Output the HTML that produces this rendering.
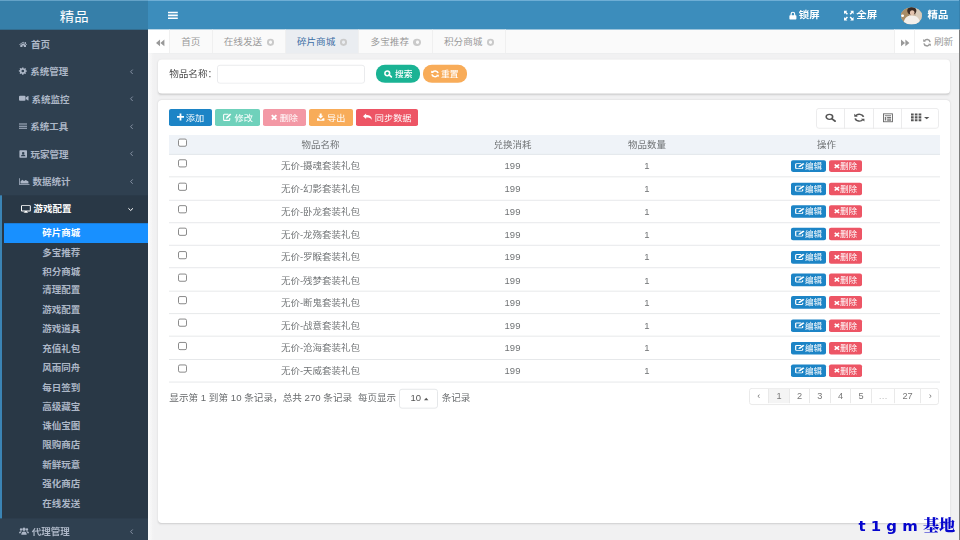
<!DOCTYPE html>
<html lang="zh-CN">
<head>
<meta charset="utf-8">
<title>精品</title>
<style>
*{box-sizing:border-box;margin:0;padding:0}
html,body{width:960px;height:540px;overflow:hidden}
body{font-family:"Liberation Sans","Noto Sans CJK SC",sans-serif;font-size:9.5px;color:#676a6c;background:#f1f1f2;position:relative}
svg{display:block;position:absolute;overflow:visible}
div,span{white-space:nowrap}
/* sidebar */
#side{position:absolute;left:0;top:0;width:147.5px;height:600px;background:#2f4050}
#logo{position:absolute;left:0;top:0;width:147.5px;height:33.333px;background:#367fa9;color:#fff;font-size:14.4px;line-height:34.667px;text-align:center;padding-left:1px;border-top:1.4px solid #6aa6cb}
.mi{position:absolute;left:0;width:147.5px;height:30.556px;color:#adb7c7;font-weight:700;font-size:9.5px;line-height:31.444px;padding-left:30.5px}
.mi.on{color:#fff}
#open{position:absolute;left:0;top:217px;width:147.5px;height:359.333px;background:#293846;border-left:2.2px solid #3b84b4}
.si{position:absolute;left:4px;width:143.5px;height:22.222px;line-height:23.333px;color:#adb7c7;font-weight:700;font-size:9.5px;padding-left:38.3px}
.si.on{color:#fff}
/* navbar */
#nav{position:absolute;left:147.5px;top:0;width:812.5px;height:33.333px;background:#3c8dbc;border-top:1.4px solid #74b3d8}
.nt{position:absolute;top:0;line-height:32.222px;font-weight:700;font-size:10.4px;color:#fff}
/* tabs */
#tabs{position:absolute;left:147.5px;top:33.333px;width:812.5px;height:26.667px;background:#fafafa;border-bottom:1px solid #ebecee}
.tab{position:absolute;top:0;height:25.556px;line-height:28.889px;font-size:9.65px;color:#999;border-right:1px solid #f0f0f0;background:#fafafa}
.tab.w{background:#fff}
.tab.on{background:#eaedf1;color:#3b6ea5}
.tab i{position:absolute;top:9.667px;width:7.6px;height:8px;border-radius:50%;background:#cacaca}
.tab i:after{content:"";position:absolute;left:2.2px;top:2.444px;width:3px;height:3.333px;border-radius:50%;background:#fff}
.tab i:after{background:#fafafa}.tab.on i:after{background:#eaedf1}
/* panels */
.panel{position:absolute;left:157.7px;width:792.3px;background:#fff;border-radius:4px;box-shadow:0 1px 2px rgba(120,120,120,.30)}
.btn{position:absolute;top:120.556px;height:19.222px;line-height:20.444px;border-radius:2px;color:#fff;font-size:9.2px;padding-left:0}
.btn span{position:absolute;top:0}
.hr{position:absolute;left:169px;width:770.5px;height:22.222px;top:150px;background:#eff3f8;border-bottom:1px solid #e2e6ea}
.row{position:absolute;left:169px;width:770.5px;height:25.3px;border-bottom:1px solid #e4e6e8}
.c{position:absolute;top:0;height:100%;text-align:center;color:#707375;font-size:9.5px;transform:translateX(-50%)}
.hr .c{line-height:21.778px}
.row .c{line-height:25.889px}
.cb{position:absolute;left:8.7px;width:8.9px;height:9px;border:1px solid #858585;border-radius:2px;background:#fff}
.ab{position:absolute;top:5.556px;height:13.889px;line-height:14.778px;border-radius:2px;color:#fff;font-size:8.6px}
.ab span{position:absolute;top:0}
.pg{position:absolute;top:0;height:16px;line-height:16.667px;border-right:1px solid #e9e9e9;text-align:center;font-size:9.2px;color:#777}
#wm{position:absolute;left:858.5px;top:514.2px;font-family:"DejaVu Sans","Noto Serif CJK SC",serif;font-weight:700;font-size:14.9px;color:#0505cd;line-height:24px}
#wm b{font-size:16.2px;font-weight:900}
#root{position:absolute;left:0;top:0;width:960px;height:600px;transform:scaleY(0.9);transform-origin:0 0}
</style>
</head>
<body>
<div id="root">

<div id="side">
<div id="logo">精品</div>
<div class="mi" style="top:33.5px"><svg style="left:19.2px;top:12.111px" width="8.3" height="6.556" viewBox="0 0 14 12" preserveAspectRatio="none"><path d="M7 0.6 L0.3 6.2 L1.2 7.2 L7 2.4 L12.8 7.2 L13.7 6.2 L11.6 4.4 V1.2 H10 V3.1 Z M7 3.6 L2.2 7.6 V11.6 H5.8 V8.6 H8.2 V11.6 H11.8 V7.6 Z" fill="#adb7c7"/></svg><span style="position:absolute;left:31.1px">首页</span></div>
<div class="mi" style="top:64.056px"><svg style="left:19.2px;top:11.444px" width="7.6" height="7.667" viewBox="0 0 16 16" preserveAspectRatio="none"><path fill="#adb7c7" fill-rule="evenodd" d="M6.6 0h2.8l.4 2.1 1.3.55 1.8-1.2 2 2-1.2 1.8.55 1.3 2.1.4v2.8l-2.1.4-.55 1.3 1.2 1.8-2 2-1.8-1.2-1.3.55-.4 2.1H6.6l-.4-2.1-1.3-.55-1.8 1.2-2-2 1.2-1.8-.55-1.3L-.3 9.4V6.6l2.1-.4.55-1.3-1.2-1.8 2-2 1.8 1.2 1.3-.55zM8 5.2a2.8 2.8 0 100 5.6 2.8 2.8 0 000-5.6z"/></svg><span style="position:absolute;left:30.2px">系统管理</span></div>
<svg style="left:130.4px;top:76.556px" width="3" height="5.556" viewBox="0 0 3 5" preserveAspectRatio="none"><path d="M2.700 0.300L0.600 2.500 2.700 4.700" fill="none" stroke="#8e9aab" stroke-width="0.9"/></svg>
<div class="mi" style="top:94.611px"><svg style="left:19.2px;top:11.778px" width="9.5" height="6.333" viewBox="0 0 14 10" preserveAspectRatio="none"><path fill="#adb7c7" d="M1.5 0.8h6.6a1.5 1.5 0 011.5 1.5v5.4a1.5 1.5 0 01-1.5 1.5H1.5A1.5 1.5 0 010 7.7V2.3A1.5 1.5 0 011.5.8zM10.2 3.8L13.2 1c.4-.3.8-.1.8.3v7.4c0 .4-.4.6-.8.3l-3-2.800z"/></svg><span style="position:absolute;left:31.6px">系统监控</span></div>
<svg style="left:130.4px;top:107.111px" width="3" height="5.556" viewBox="0 0 3 5" preserveAspectRatio="none"><path d="M2.700 0.300L0.600 2.500 2.700 4.700" fill="none" stroke="#8e9aab" stroke-width="0.9"/></svg>
<div class="mi" style="top:125.278px"><svg style="left:19.2px;top:12.111px" width="8.0" height="6.333" viewBox="0 0 12 10" preserveAspectRatio="none"><path fill="#adb7c7" d="M0 0.3h12v1.7H0zM0 4.15h12v1.7H0zM0 8h12v1.7H0z"/></svg><span style="position:absolute;left:30.2px">系统工具</span></div>
<svg style="left:130.4px;top:137.778px" width="3" height="5.556" viewBox="0 0 3 5" preserveAspectRatio="none"><path d="M2.700 0.300L0.600 2.500 2.700 4.700" fill="none" stroke="#8e9aab" stroke-width="0.9"/></svg>
<div class="mi" style="top:155.722px"><svg style="left:19.2px;top:11.167px" width="8.0" height="8.222" viewBox="0 0 12 12" preserveAspectRatio="none"><path fill="#adb7c7" fill-rule="evenodd" d="M1.6 0h9.4a1 1 0 011 1v10a1 1 0 01-1 1H1.600a1 1 0 01-1-1V1a1 1 0 011-1zM6.300 2.600a1.900 1.900 0 100 3.800 1.900 1.900 0 000-3.800zM3 9.600h6.600c0-2-1.200-2.900-3.300-2.900S3 7.600 3 9.600z"/></svg><span style="position:absolute;left:30.5px">玩家管理</span></div>
<svg style="left:130.4px;top:168.222px" width="3" height="5.556" viewBox="0 0 3 5" preserveAspectRatio="none"><path d="M2.700 0.300L0.600 2.500 2.700 4.700" fill="none" stroke="#8e9aab" stroke-width="0.9"/></svg>
<div class="mi" style="top:186.278px"><svg style="left:19.2px;top:11.667px" width="10.5" height="7.222" viewBox="0 0 14 10" preserveAspectRatio="none"><path fill="#adb7c7" d="M0 0h1v9h13v1H0zM2 8.200V5l2.300-2.800 2.400 2.200 2.300-1.800 3.600 2.400v3.200z"/></svg><span style="position:absolute;left:32.6px">数据统计</span></div>
<svg style="left:130.4px;top:198.778px" width="3" height="5.556" viewBox="0 0 3 5" preserveAspectRatio="none"><path d="M2.700 0.300L0.600 2.500 2.700 4.700" fill="none" stroke="#8e9aab" stroke-width="0.9"/></svg>
<div id="open"></div>
<div class="mi on" style="top:216.833px"><svg style="left:20.8px;top:10.889px" width="9.800" height="8.444" viewBox="0 0 14 12" preserveAspectRatio="none"><path fill="#fff" fill-rule="evenodd" d="M1.200 0h11.600a1.200 1.200 0 011.200 1.200v7.400a1.200 1.200 0 01-1.200 1.200H8.600l.5 1.200h1v1H3.900v-1h1l.5-1.200H1.200A1.200 1.200 0 010 8.600V1.200A1.200 1.200 0 011.200 0zM1.400 1.400v6.800h11.200V1.400z"/></svg><span style="position:absolute;left:33.5px">游戏配置</span></div>
<svg style="left:127.5px;top:230.667px" width="5.4" height="3.556" viewBox="0 0 5.400 3.200" preserveAspectRatio="none"><path d="M0.400 0.400L2.700 2.600 5 0.400" fill="none" stroke="#fff" stroke-width="1"/></svg>
<div style="position:absolute;left:4px;top:247.556px;width:143.500px;height:22.222px;background:#1890ff"></div>
<div class="si on" style="top:247.056px">碎片商城</div>
<div class="si" style="top:268.522px">多宝推荐</div>
<div class="si" style="top:289.989px">积分商城</div>
<div class="si" style="top:311.456px">清理配置</div>
<div class="si" style="top:332.922px">游戏配置</div>
<div class="si" style="top:354.389px">游戏道具</div>
<div class="si" style="top:375.856px">充值礼包</div>
<div class="si" style="top:397.322px">风雨同舟</div>
<div class="si" style="top:418.789px">每日签到</div>
<div class="si" style="top:440.256px">高级藏宝</div>
<div class="si" style="top:461.722px">诛仙宝图</div>
<div class="si" style="top:483.189px">限购商店</div>
<div class="si" style="top:504.656px">新鲜玩意</div>
<div class="si" style="top:526.122px">强化商店</div>
<div class="si" style="top:547.589px">在线发送</div>
<div class="mi" style="top:574.722px"><svg style="left:19px;top:10.889px" width="10" height="8.444" viewBox="0 0 15 11" preserveAspectRatio="none"><path fill="#adb7c7" d="M7.500 0.200a2.500 2.500 0 110 5 2.500 2.500 0 010-5zM3 1.400a1.800 1.800 0 110 3.600 1.800 1.800 0 010-3.600zM12 1.400a1.800 1.800 0 110 3.600 1.800 1.800 0 010-3.600zM3.400 10.800c0-3.400 1.600-5 4.100-5s4.100 1.600 4.100 5zM0 8.400c0-2 1-3 3-3 .5 0 .9.100 1.200.300C3 6.500 2.500 7.500 2.400 8.400zM15 8.400c0-2-1-3-3-3-.5 0-.9.100-1.200.300 1.200.8 1.700 1.800 1.800 2.700z"/></svg><span style="position:absolute;left:31.7px">代理管理</span></div>
<svg style="left:130.4px;top:587.778px" width="3" height="5.556" viewBox="0 0 3 5" preserveAspectRatio="none"><path d="M2.700 0.300L0.600 2.500 2.700 4.700" fill="none" stroke="#8e9aab" stroke-width="0.9"/></svg>
</div>
<div id="nav">
<svg style="left:20.700px;top:12px" width="9.800" height="8.222" viewBox="0 0 12 9.500" preserveAspectRatio="none"><path fill="#fff" d="M0 0h12v2H0zM0 3.750h12v2H0zM0 7.500h12v2H0z"/></svg>
<svg style="left:641.200px;top:11.556px" width="7.800" height="8.667" viewBox="0 0 10 10" preserveAspectRatio="none"><path fill="#fff" fill-rule="evenodd" d="M5 0a3 3 0 013 3v1.600h.6a.9.900 0 01.9.900v3.600a.9.900 0 01-.9.900H1.400a.9.900 0 01-.9-.9V5.500a.9.900 0 01.9-.9H2V3a3 3 0 013-3zm0 1.500A1.500 1.500 0 003.500 3v1.600h3V3A1.500 1.500 0 005 1.500z"/></svg>
<div class="nt" style="left:651.300px">锁屏</div>
<svg style="left:696.500px;top:11.333px" width="9.600" height="10.667" viewBox="0 0 12 12" preserveAspectRatio="none"><path fill="#fff" d="M0 0h4.200L2.800 1.400 5 3.600 3.600 5 1.400 2.800 0 4.200zM12 0v4.200L10.600 2.800 8.400 5 7 3.600 9.200 1.400 7.800 0zM0 12V7.800l1.400 1.400L3.600 7 5 8.400 2.800 10.600 4.200 12zM12 12H7.800l1.400-1.400L7 8.400 8.400 7l2.200 2.200L12 7.800z"/></svg>
<div class="nt" style="left:708.800px">全屏</div>
<svg style="left:753.400px;top:7.333px" width="21" height="19.111" viewBox="0 0 21 17.200" preserveAspectRatio="none"><defs><clipPath id="av"><ellipse cx="10.500" cy="8.600" rx="10.500" ry="8.600"/></clipPath></defs><g clip-path="url(#av)"><rect width="21" height="17.200" fill="#cdbba4"/><rect x="0" y="0" width="8" height="17.200" fill="#a88c66"/><rect x="15" y="0" width="6" height="17.200" fill="#d9ccbb"/><ellipse cx="10.800" cy="3.600" rx="4.600" ry="4" fill="#3b2a22"/><ellipse cx="11.200" cy="5.600" rx="2.300" ry="2.600" fill="#e3c3ad"/><path d="M2.500 17.200c.3-6 3-8.800 8.300-8.800s8 2.800 8.300 8.800z" fill="#f3efea"/><ellipse cx="1.500" cy="8.500" rx="1.500" ry="1.200" fill="#fff"/></g></svg>
<div class="nt" style="left:780px">精品</div>
</div>
<div style="position:absolute;left:958.700px;top:0;width:1.300px;height:33px;background:#3681ad"></div>
<div id="tabs">
<div class="tab w" style="left:0;width:22.500px"><svg style="left:8px;top:11.111px" width="8.400" height="7.333" viewBox="0 0 10 8" preserveAspectRatio="none"><path fill="#999" d="M4.800 0v8L0 4zM10 0v8L5.200 4z"/></svg></div>
<div class="tab" style="left:22.5px;width:42.5px;padding-left:11.2px">首页</div>
<div class="tab" style="left:65.0px;width:73.2px;padding-left:11.2px">在线发送<i style="left:54.1px"></i></div>
<div class="tab on" style="left:138.2px;width:73.7px;padding-left:11.2px">碎片商城<i style="left:54.1px"></i></div>
<div class="tab" style="left:211.9px;width:73.4px;padding-left:11.2px">多宝推荐<i style="left:54.1px"></i></div>
<div class="tab" style="left:285.3px;width:73.4px;padding-left:11.2px">积分商城<i style="left:54.1px"></i></div>
<div class="tab w" style="left:746.500px;width:21px;border-left:1px solid #f0f0f0"><svg style="left:6px;top:10.667px" width="8.400" height="7.333" viewBox="0 0 10 8" preserveAspectRatio="none"><path fill="#999" d="M0 0v8l4.800-4zM5.200 0v8L10 4z"/></svg></div>
<div class="tab w" style="left:767.500px;width:45px;border-right:none;padding-left:19px"><svg style="left:8.200px;top:9.556px" width="8" height="8.889" viewBox="0 0 12 12" preserveAspectRatio="none"><path fill="none" stroke="#999" stroke-width="2.200" d="M10.600 5A4.700 4.700 0 002 3.400M1.400 7A4.700 4.700 0 0010 8.600"/><path fill="#999" d="M0.300 0.600v4h4zM11.700 11.400v-4h-4z"/></svg>刷新</div>
</div>
<div style="position:absolute;left:147.500px;top:59.222px;width:6px;height:540.778px;background:linear-gradient(90deg,#fbfbfb,rgba(251,251,251,0))"></div>
<div class="panel" style="top:66.444px;height:37.778px"></div>
<div style="position:absolute;left:169.200px;top:71.111px;line-height:21.667px;font-size:9.600px;color:#4c4c4c">物品名称：</div>
<div style="position:absolute;left:217.100px;top:72.222px;width:147.500px;height:20.333px;border:1px solid #e9eaec;border-radius:3px;background:#fff"></div>
<div style="position:absolute;left:376px;top:72.222px;width:44px;height:19.778px;border-radius:9px;background:#1ab394;color:#fff;font-size:8.800px;font-weight:500;line-height:21.111px"><svg style="left:8.200px;top:6.222px" width="8.200" height="8.222" viewBox="0 0 10 9" preserveAspectRatio="none"><circle cx="4" cy="3.800" r="2.900" fill="none" stroke="#fff" stroke-width="1.900"/><path d="M6.200 5.800L9 8.200" stroke="#fff" stroke-width="2.100" stroke-linecap="round"/></svg><span style="position:absolute;left:19px">搜索</span></div>
<div style="position:absolute;left:423.300px;top:72.222px;width:43.900px;height:19.778px;border-radius:9px;background:#f8ac59;color:#fff;font-size:8.800px;font-weight:500;line-height:21.111px"><svg style="left:7.400px;top:6.222px" width="8" height="8" viewBox="0 0 12 12" preserveAspectRatio="none"><path fill="none" stroke="#fff" stroke-width="2.500" d="M10.600 5A4.700 4.700 0 002 3.400M1.400 7A4.700 4.700 0 0010 8.600"/><path fill="#fff" d="M0.300 0.600v4h4zM11.700 11.400v-4h-4z"/></svg><span style="position:absolute;left:17.700px">重置</span></div>
<div class="panel" style="top:111.111px;height:470px"></div>
<div class="btn" style="left:169px;width:43px;background:#1c84c6"><svg style="left:8px;top:5.556px" width="7" height="7.778" viewBox="0 0 8 8" preserveAspectRatio="none"><path fill="#fff" d="M3 0h2v3h3v2H5v3H3V5H0V3h3z"/></svg><span style="left:16.800px">添加</span></div>
<div class="btn" style="left:215px;width:44.800px;background:#6fd1bb"><svg style="left:7.700px;top:5.111px" width="8.400" height="8.444" viewBox="0 0 11 10" preserveAspectRatio="none"><path fill="none" stroke="#fff" stroke-width="1.400" d="M7.200 1.200H1.800a1 1 0 00-1 1v6a1 1 0 001 1h6a1 1 0 001-1V6.200"/><path fill="#fff" d="M9.300 0l1.600 1.600L6 6.500l-2.200.6.600-2.200z"/></svg><span style="left:19.600px">修改</span></div>
<div class="btn" style="left:262.500px;width:43px;background:#f398a5"><svg style="left:8.400px;top:6.111px" width="6.200" height="6.889" viewBox="0 0 8 8" preserveAspectRatio="none"><path stroke="#fff" stroke-width="2.400" d="M1 1l6 6M7 1L1 7"/></svg><span style="left:17.200px">删除</span></div>
<div class="btn" style="left:308.700px;width:44.300px;background:#f8ac59"><svg style="left:8.600px;top:5.333px" width="7.400" height="8.222" viewBox="0 0 10 10" preserveAspectRatio="none"><path fill="#fff" d="M3.700 0h2.600v3.300h2.200L5 6.800 1.500 3.300h2.200zM0 6.600h2l2 2h2l2-2h2V10H0z"/></svg><span style="left:18.400px">导出</span></div>
<div class="btn" style="left:355.500px;width:62.500px;background:#ed5565"><svg style="left:7.800px;top:5.556px" width="9" height="7.778" viewBox="0 0 13 10" preserveAspectRatio="none"><path fill="#fff" d="M4.500 0v2.200c4.500 0 8.300 1.500 8.300 7.300-1.300-3-3.800-3.700-8.300-3.700V8L0 4z"/><path fill="#fff" d="M7.500 0.400V2l-2.400 2 2.400 2v1.700L3.400 4z" opacity="0"/></svg><span style="left:19.300px">同步数据</span></div>
<div style="position:absolute;left:816.200px;top:120.222px;width:122.600px;height:22.333px;border:1px solid #ebebec;border-radius:3px;background:#fff"></div>
<div style="position:absolute;left:844.3px;top:120.222px;width:1px;height:22.333px;background:#ebebec"></div>
<div style="position:absolute;left:873.3px;top:120.222px;width:1px;height:22.333px;background:#ebebec"></div>
<div style="position:absolute;left:901.2px;top:120.222px;width:1px;height:22.333px;background:#ebebec"></div>
<svg style="left:825.200px;top:126.111px" width="10.800" height="9.222" viewBox="0 0 10 10" preserveAspectRatio="none"><circle cx="4.100" cy="4.100" r="3" fill="none" stroke="#555" stroke-width="1.500"/><path d="M6.400 6.400L9.300 9.300" stroke="#555" stroke-width="1.800" stroke-linecap="round"/></svg>
<svg style="left:853.900px;top:125.667px" width="10.700" height="9.444" viewBox="0 0 12 12" preserveAspectRatio="none"><path fill="none" stroke="#555" stroke-width="1.900" d="M10.600 5A4.700 4.700 0 002 3.400M1.400 7A4.700 4.700 0 0010 8.600"/><path fill="#555" d="M0.300 0.600v4h4zM11.700 11.400v-4h-4z"/></svg>
<svg style="left:883.100px;top:125.667px" width="9.900" height="9.778" viewBox="0 0 11 10" preserveAspectRatio="none"><rect x="0.500" y="0.500" width="10" height="9" fill="none" stroke="#666" stroke-width="1"/><path fill="#777" d="M2 2h7v1.200H2zM2 4.200h1.600v4H2zM4.600 4.200H9v1H4.600zM4.600 5.800H9v1H4.600zM4.600 7.300H9v1H4.600z"/></svg>
<svg style="left:910.800px;top:126.333px" width="10.300" height="8.778" viewBox="0 0 10 9" preserveAspectRatio="none"><path fill="#555" d="M0 0h2.600v2.400H0zM3.700 0h2.600v2.400H3.700zM7.400 0H10v2.400H7.400zM0 3.300h2.600v2.400H0zM3.700 3.300h2.600v2.400H3.700zM7.400 3.300H10v2.400H7.400zM0 6.600h2.600V9H0zM3.700 6.600h2.600V9H3.700zM7.400 6.600H10V9H7.400z"/></svg>
<svg style="left:924.200px;top:130.444px" width="5.400" height="2.556" viewBox="0 0 5 2.600" preserveAspectRatio="none"><path fill="#555" d="M0 0h5L2.500 2.600z"/></svg>
<div class="hr"><div class="cb" style="top:4.333px"></div>
<div class="c" style="left:151.5px">物品名称</div>
<div class="c" style="left:343.5px">兑换消耗</div>
<div class="c" style="left:478.0px">物品数量</div>
<div class="c" style="left:657.5px">操作</div>
</div>
<div class="row" style="top:172px"><div class="cb" style="top:5.333px"></div><div class="c" style="left:151.500px">无价-摄魂套装礼包</div><div class="c" style="left:343.500px">199</div><div class="c" style="left:478px">1</div>
<div class="ab" style="left:622px;width:35px;background:#1c84c6"><svg style="left:3.800px;top:3px" width="9.600" height="6.889" viewBox="0 0 11 10" preserveAspectRatio="none"><path fill="none" stroke="#fff" stroke-width="1.400" d="M7.200 1.200H1.800a1 1 0 00-1 1v6a1 1 0 001 1h6a1 1 0 001-1V6.200"/><path fill="#fff" d="M9.300 0l1.600 1.600L6 6.500l-2.200.6.600-2.200z"/></svg><span style="left:13.900px">编辑</span></div>
<div class="ab" style="left:660px;width:33px;background:#ed5565"><svg style="left:4.600px;top:4.222px" width="5.800" height="5.333" viewBox="0 0 8 8" preserveAspectRatio="none"><path stroke="#fff" stroke-width="2.400" d="M1 1l6 6M7 1L1 7"/></svg><span style="left:11px">删除</span></div>
</div>
<div class="row" style="top:197.3px"><div class="cb" style="top:5.333px"></div><div class="c" style="left:151.500px">无价-幻影套装礼包</div><div class="c" style="left:343.500px">199</div><div class="c" style="left:478px">1</div>
<div class="ab" style="left:622px;width:35px;background:#1c84c6"><svg style="left:3.800px;top:3px" width="9.600" height="6.889" viewBox="0 0 11 10" preserveAspectRatio="none"><path fill="none" stroke="#fff" stroke-width="1.400" d="M7.200 1.200H1.800a1 1 0 00-1 1v6a1 1 0 001 1h6a1 1 0 001-1V6.200"/><path fill="#fff" d="M9.300 0l1.600 1.600L6 6.500l-2.200.6.600-2.200z"/></svg><span style="left:13.900px">编辑</span></div>
<div class="ab" style="left:660px;width:33px;background:#ed5565"><svg style="left:4.600px;top:4.222px" width="5.800" height="5.333" viewBox="0 0 8 8" preserveAspectRatio="none"><path stroke="#fff" stroke-width="2.400" d="M1 1l6 6M7 1L1 7"/></svg><span style="left:11px">删除</span></div>
</div>
<div class="row" style="top:222.6px"><div class="cb" style="top:5.333px"></div><div class="c" style="left:151.500px">无价-卧龙套装礼包</div><div class="c" style="left:343.500px">199</div><div class="c" style="left:478px">1</div>
<div class="ab" style="left:622px;width:35px;background:#1c84c6"><svg style="left:3.800px;top:3px" width="9.600" height="6.889" viewBox="0 0 11 10" preserveAspectRatio="none"><path fill="none" stroke="#fff" stroke-width="1.400" d="M7.200 1.200H1.800a1 1 0 00-1 1v6a1 1 0 001 1h6a1 1 0 001-1V6.200"/><path fill="#fff" d="M9.300 0l1.600 1.600L6 6.500l-2.200.6.600-2.200z"/></svg><span style="left:13.900px">编辑</span></div>
<div class="ab" style="left:660px;width:33px;background:#ed5565"><svg style="left:4.600px;top:4.222px" width="5.800" height="5.333" viewBox="0 0 8 8" preserveAspectRatio="none"><path stroke="#fff" stroke-width="2.400" d="M1 1l6 6M7 1L1 7"/></svg><span style="left:11px">删除</span></div>
</div>
<div class="row" style="top:247.9px"><div class="cb" style="top:5.333px"></div><div class="c" style="left:151.500px">无价-龙殇套装礼包</div><div class="c" style="left:343.500px">199</div><div class="c" style="left:478px">1</div>
<div class="ab" style="left:622px;width:35px;background:#1c84c6"><svg style="left:3.800px;top:3px" width="9.600" height="6.889" viewBox="0 0 11 10" preserveAspectRatio="none"><path fill="none" stroke="#fff" stroke-width="1.400" d="M7.200 1.200H1.800a1 1 0 00-1 1v6a1 1 0 001 1h6a1 1 0 001-1V6.200"/><path fill="#fff" d="M9.300 0l1.600 1.600L6 6.500l-2.200.6.600-2.200z"/></svg><span style="left:13.900px">编辑</span></div>
<div class="ab" style="left:660px;width:33px;background:#ed5565"><svg style="left:4.600px;top:4.222px" width="5.800" height="5.333" viewBox="0 0 8 8" preserveAspectRatio="none"><path stroke="#fff" stroke-width="2.400" d="M1 1l6 6M7 1L1 7"/></svg><span style="left:11px">删除</span></div>
</div>
<div class="row" style="top:273.2px"><div class="cb" style="top:5.333px"></div><div class="c" style="left:151.500px">无价-罗睺套装礼包</div><div class="c" style="left:343.500px">199</div><div class="c" style="left:478px">1</div>
<div class="ab" style="left:622px;width:35px;background:#1c84c6"><svg style="left:3.800px;top:3px" width="9.600" height="6.889" viewBox="0 0 11 10" preserveAspectRatio="none"><path fill="none" stroke="#fff" stroke-width="1.400" d="M7.200 1.200H1.800a1 1 0 00-1 1v6a1 1 0 001 1h6a1 1 0 001-1V6.200"/><path fill="#fff" d="M9.300 0l1.600 1.600L6 6.500l-2.200.6.600-2.200z"/></svg><span style="left:13.900px">编辑</span></div>
<div class="ab" style="left:660px;width:33px;background:#ed5565"><svg style="left:4.600px;top:4.222px" width="5.800" height="5.333" viewBox="0 0 8 8" preserveAspectRatio="none"><path stroke="#fff" stroke-width="2.400" d="M1 1l6 6M7 1L1 7"/></svg><span style="left:11px">删除</span></div>
</div>
<div class="row" style="top:298.5px"><div class="cb" style="top:5.333px"></div><div class="c" style="left:151.500px">无价-残梦套装礼包</div><div class="c" style="left:343.500px">199</div><div class="c" style="left:478px">1</div>
<div class="ab" style="left:622px;width:35px;background:#1c84c6"><svg style="left:3.800px;top:3px" width="9.600" height="6.889" viewBox="0 0 11 10" preserveAspectRatio="none"><path fill="none" stroke="#fff" stroke-width="1.400" d="M7.200 1.200H1.800a1 1 0 00-1 1v6a1 1 0 001 1h6a1 1 0 001-1V6.200"/><path fill="#fff" d="M9.300 0l1.600 1.600L6 6.500l-2.200.6.600-2.200z"/></svg><span style="left:13.900px">编辑</span></div>
<div class="ab" style="left:660px;width:33px;background:#ed5565"><svg style="left:4.600px;top:4.222px" width="5.800" height="5.333" viewBox="0 0 8 8" preserveAspectRatio="none"><path stroke="#fff" stroke-width="2.400" d="M1 1l6 6M7 1L1 7"/></svg><span style="left:11px">删除</span></div>
</div>
<div class="row" style="top:323.8px"><div class="cb" style="top:5.333px"></div><div class="c" style="left:151.500px">无价-断鬼套装礼包</div><div class="c" style="left:343.500px">199</div><div class="c" style="left:478px">1</div>
<div class="ab" style="left:622px;width:35px;background:#1c84c6"><svg style="left:3.800px;top:3px" width="9.600" height="6.889" viewBox="0 0 11 10" preserveAspectRatio="none"><path fill="none" stroke="#fff" stroke-width="1.400" d="M7.200 1.200H1.800a1 1 0 00-1 1v6a1 1 0 001 1h6a1 1 0 001-1V6.200"/><path fill="#fff" d="M9.300 0l1.600 1.600L6 6.500l-2.200.6.600-2.200z"/></svg><span style="left:13.900px">编辑</span></div>
<div class="ab" style="left:660px;width:33px;background:#ed5565"><svg style="left:4.600px;top:4.222px" width="5.800" height="5.333" viewBox="0 0 8 8" preserveAspectRatio="none"><path stroke="#fff" stroke-width="2.400" d="M1 1l6 6M7 1L1 7"/></svg><span style="left:11px">删除</span></div>
</div>
<div class="row" style="top:349.1px"><div class="cb" style="top:5.333px"></div><div class="c" style="left:151.500px">无价-战意套装礼包</div><div class="c" style="left:343.500px">199</div><div class="c" style="left:478px">1</div>
<div class="ab" style="left:622px;width:35px;background:#1c84c6"><svg style="left:3.800px;top:3px" width="9.600" height="6.889" viewBox="0 0 11 10" preserveAspectRatio="none"><path fill="none" stroke="#fff" stroke-width="1.400" d="M7.200 1.200H1.800a1 1 0 00-1 1v6a1 1 0 001 1h6a1 1 0 001-1V6.200"/><path fill="#fff" d="M9.300 0l1.600 1.600L6 6.500l-2.200.6.600-2.200z"/></svg><span style="left:13.900px">编辑</span></div>
<div class="ab" style="left:660px;width:33px;background:#ed5565"><svg style="left:4.600px;top:4.222px" width="5.800" height="5.333" viewBox="0 0 8 8" preserveAspectRatio="none"><path stroke="#fff" stroke-width="2.400" d="M1 1l6 6M7 1L1 7"/></svg><span style="left:11px">删除</span></div>
</div>
<div class="row" style="top:374.4px"><div class="cb" style="top:5.333px"></div><div class="c" style="left:151.500px">无价-沧海套装礼包</div><div class="c" style="left:343.500px">199</div><div class="c" style="left:478px">1</div>
<div class="ab" style="left:622px;width:35px;background:#1c84c6"><svg style="left:3.800px;top:3px" width="9.600" height="6.889" viewBox="0 0 11 10" preserveAspectRatio="none"><path fill="none" stroke="#fff" stroke-width="1.400" d="M7.200 1.200H1.800a1 1 0 00-1 1v6a1 1 0 001 1h6a1 1 0 001-1V6.200"/><path fill="#fff" d="M9.300 0l1.600 1.600L6 6.500l-2.200.6.600-2.200z"/></svg><span style="left:13.900px">编辑</span></div>
<div class="ab" style="left:660px;width:33px;background:#ed5565"><svg style="left:4.600px;top:4.222px" width="5.800" height="5.333" viewBox="0 0 8 8" preserveAspectRatio="none"><path stroke="#fff" stroke-width="2.400" d="M1 1l6 6M7 1L1 7"/></svg><span style="left:11px">删除</span></div>
</div>
<div class="row" style="top:399.7px"><div class="cb" style="top:5.333px"></div><div class="c" style="left:151.500px">无价-天威套装礼包</div><div class="c" style="left:343.500px">199</div><div class="c" style="left:478px">1</div>
<div class="ab" style="left:622px;width:35px;background:#1c84c6"><svg style="left:3.800px;top:3px" width="9.600" height="6.889" viewBox="0 0 11 10" preserveAspectRatio="none"><path fill="none" stroke="#fff" stroke-width="1.400" d="M7.200 1.200H1.800a1 1 0 00-1 1v6a1 1 0 001 1h6a1 1 0 001-1V6.200"/><path fill="#fff" d="M9.300 0l1.600 1.600L6 6.500l-2.200.6.600-2.200z"/></svg><span style="left:13.900px">编辑</span></div>
<div class="ab" style="left:660px;width:33px;background:#ed5565"><svg style="left:4.600px;top:4.222px" width="5.800" height="5.333" viewBox="0 0 8 8" preserveAspectRatio="none"><path stroke="#fff" stroke-width="2.400" d="M1 1l6 6M7 1L1 7"/></svg><span style="left:11px">删除</span></div>
</div>
<div style="position:absolute;left:169.300px;top:431.667px;line-height:22.222px;font-size:9.650px;color:#676a6c">显示第 1 到第 10 条记录，总共 270 条记录</div>
<div style="position:absolute;left:358px;top:431.667px;line-height:21.667px;font-size:9.500px;color:#676a6c">每页显示</div>
<div style="position:absolute;left:399.300px;top:432.222px;width:38.400px;height:21.444px;border:1px solid #e4e6e8;border-radius:3px;background:#fff;line-height:20px;font-size:9.500px;padding-left:10.200px;color:#555">10<svg style="left:23.600px;top:8.889px" width="4.400" height="2.667" viewBox="0 0 5 2.600" preserveAspectRatio="none"><path fill="#555" d="M0 2.600h5L2.500 0z"/></svg></div>
<div style="position:absolute;left:441.700px;top:431.667px;line-height:21.667px;font-size:9.500px;color:#676a6c">条记录</div>
<div style="position:absolute;left:749.200px;top:431.444px;width:190px;height:18.222px;border:1px solid #e9e9e9;border-radius:3px;background:#fff;overflow:hidden">
<div class="pg" style="left:-0.4px;width:19.2px;">‹</div>
<div class="pg" style="left:18.8px;width:21.0px;background:#f4f4f4;">1</div>
<div class="pg" style="left:39.8px;width:20.0px;">2</div>
<div class="pg" style="left:59.8px;width:20.7px;">3</div>
<div class="pg" style="left:80.5px;width:20.6px;">4</div>
<div class="pg" style="left:101.1px;width:20.6px;">5</div>
<div class="pg" style="left:121.7px;width:23.2px;color:#bbb;">…</div>
<div class="pg" style="left:144.9px;width:26.0px;">27</div>
<div class="pg" style="left:170.9px;width:18.6px;border-right:none;">›</div>
</div>
<div style="position:absolute;left:958.700px;top:33px;width:1.300px;height:567px;background:#7d7d7d"></div>
</div>
<div id="wm">t 1 g m <b>基地</b></div>
</body>
</html>
